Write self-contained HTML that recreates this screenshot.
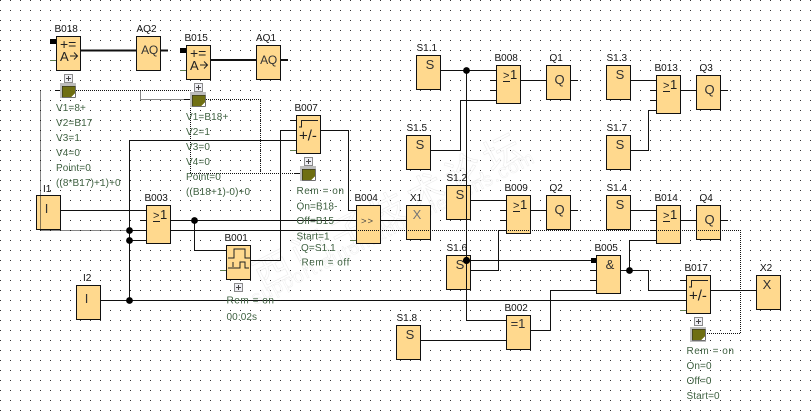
<!DOCTYPE html>
<html><head><meta charset="utf-8"><style>
html,body{margin:0;padding:0;background:#fff;width:811px;height:411px;overflow:hidden}
svg{display:block}
text{font-family:"Liberation Sans","Noto Sans CJK SC",sans-serif}
.b{fill:#FFD98E;stroke:#111;stroke-width:1}
.w{fill:none;stroke:#111;stroke-width:1}
.t{fill:none;stroke:#111;stroke-width:2}
.g{fill:none;stroke:#5a7a4a;stroke-width:1}
.d{fill:none;stroke:#111;stroke-width:1;stroke-dasharray:1 1}
.l{font-size:10px;fill:#111}
.s{font-size:13px;fill:#333;text-anchor:middle}
.aq{font-size:12px;fill:#333;text-anchor:middle;letter-spacing:-.3px}
.n{font-size:10px;fill:#3f6141;letter-spacing:.1px}
.r{letter-spacing:.55px}
.gt{font-size:14px;fill:#222}
.ge{font-size:11px;fill:#222}
.on{font-size:13px;fill:#222}
.pm{font-size:15px;fill:#222}
.sym{fill:none;stroke:#222;stroke-width:1}
</style></head><body>
<svg width="811" height="411" viewBox="0 0 811 411" xmlns="http://www.w3.org/2000/svg" shape-rendering="crispEdges">
<defs>
<pattern id="gr" width="10" height="10" patternUnits="userSpaceOnUse"><rect width="1" height="1" fill="#333"/></pattern>
</defs>
<rect width="811" height="411" fill="#fff"/>
<rect width="811" height="411" fill="url(#gr)"/>

<!-- watermark -->
<g shape-rendering="auto" opacity=".7">
<text transform="translate(262 290) rotate(-27)" font-size="37" fill="#fff" stroke="#e4e4e4" stroke-width=".6" letter-spacing="6">西门子技术论坛</text>
<text transform="translate(255 305) rotate(-27)" font-size="19" fill="#fff" stroke="#e8e8e8" stroke-width=".5" letter-spacing="1.2">support.automation.siemens.com</text>
</g>

<!-- solid wires under blocks -->
<g class="w">
<path d="M60 210.5H146M170 220.5H356M129.5 140V300.5M130 140.5H296M130 230.5H356M130 240.5H146M100 300.5H686"/>
<path d="M140 220.5H146M194.5 220.5V250.5H226M250 260.5H280.5V130.5H296M320 130.5H348.5V210.5H356M290 120.5H296M380 220.5H406"/>
<path d="M440 70.5H496M430 150.5H460.5V100.5H496M490 80.5H496M490 90.5H496M520 80.5H546M570 80.5H578"/>
<path d="M470 200.5H506M500 210.5H506M500 220.5H506M530 210.5H546M570 210.5H578M470 270.5H498.5V230.5H506M466.5 260.5H596M590 270.5H596M590 280.5H596"/>
<path d="M630 80.5H656M650 90.5H656M650 100.5H656M630 150.5H648.5V110.5H656M680 90.5H696M720 90.5H728"/>
<path d="M630 210.5H656M650 220.5H656M650 230.5H656M680 220.5H696M720 220.5H728"/>
<path d="M420 340.5H506M530 330.5H550.5V290.5H596M620 270.5H648.5V290.5H686M629.5 270.5V240.5H656M680 280.5H686M710 290.5H756"/>
</g>
<g class="g"><path d="M50 60.5H56M180 70.5H186M290 150.5H296M350 240.5H356M220 270.5H226M680 310.5H686"/></g>
<g class="t"><path d="M80 50.5H136M161 50.5H168M210 60H256M281 60H288"/></g>
<rect x="50" y="39" width="7" height="5" fill="#000"/>
<rect x="180" y="48" width="7" height="5" fill="#000"/>
<rect x="591" y="258" width="6" height="5" fill="#000"/>

<!-- blocks -->
<g class="b">
<rect x="56.5" y="36.5" width="24" height="34"/>
<rect x="136.5" y="36.5" width="24" height="34"/>
<rect x="186.5" y="45.5" width="24" height="34"/>
<rect x="256.5" y="45.5" width="24" height="34"/>
<rect x="416.5" y="55.5" width="24" height="34"/>
<rect x="496.5" y="65.5" width="24" height="38"/>
<rect x="406.5" y="135.5" width="24" height="34"/>
<rect x="296.5" y="115.5" width="24" height="38"/>
<rect x="446.5" y="185.5" width="24" height="34"/>
<rect x="506.5" y="195.5" width="24" height="38"/>
<rect x="546.5" y="65.5" width="24" height="34"/>
<rect x="606.5" y="65.5" width="24" height="34"/>
<rect x="656.5" y="75.5" width="24" height="38"/>
<rect x="696.5" y="75.5" width="24" height="34"/>
<rect x="606.5" y="135.5" width="24" height="34"/>
<rect x="546.5" y="195.5" width="24" height="34"/>
<rect x="606.5" y="195.5" width="24" height="34"/>
<rect x="656.5" y="205.5" width="24" height="38"/>
<rect x="696.5" y="205.5" width="24" height="34"/>
<rect x="36.5" y="195.5" width="24" height="34"/>
<rect x="146.5" y="205.5" width="24" height="38"/>
<rect x="76.5" y="285.5" width="24" height="34"/>
<rect x="226.5" y="245.5" width="24" height="34"/>
<rect x="356.5" y="205.5" width="24" height="38"/>
<rect x="406.5" y="205.5" width="24" height="34"/>
<rect x="446.5" y="255.5" width="24" height="34"/>
<rect x="396.5" y="325.5" width="24" height="34"/>
<rect x="506.5" y="315.5" width="24" height="34"/>
<rect x="596.5" y="255.5" width="24" height="38"/>
<rect x="686.5" y="275.5" width="24" height="38"/>
<rect x="756.5" y="275.5" width="24" height="34"/>
</g>

<!-- wires on top of blocks -->
<g class="w"><path d="M466.5 70.5V320.5H506"/></g>
<g class="d">
<path d="M76 90.5H190M40.5 90.5V230.5H129M140.5 90.5V99.5H190M206 99.5H260.5V173.5M190.5 100V173.5M190 173.5H295M356 230.5H740.5V333.5H706"/>
</g>
<g class="w"><path d="M55 90.5H62M184 99.5H192M295 173.5H302"/></g>

<!-- junctions -->
<g fill="#000" shape-rendering="auto">
<circle cx="466.5" cy="70.5" r="3.4"/>
<circle cx="466.5" cy="260.5" r="3.6"/>
<circle cx="129.5" cy="230.5" r="3.4"/>
<circle cx="129.5" cy="240.5" r="3.4"/>
<circle cx="129.5" cy="300.5" r="3.4"/>
<circle cx="194.5" cy="220.5" r="3.4"/>
<circle cx="629.5" cy="270.5" r="3.4"/>
</g>

<!-- note icons -->
<g>
<rect x="60" y="83" width="16" height="15" fill="#bdbdbd"/><rect x="62" y="86" width="13" height="11" fill="#6f6f12" stroke="#222" stroke-width=".5"/><path d="M71 97l4-4v4z" fill="#fff"/>
<rect x="190" y="92" width="16" height="15" fill="#bdbdbd"/><rect x="192" y="95" width="13" height="11" fill="#6f6f12" stroke="#222" stroke-width=".5"/><path d="M201 106l4-4v4z" fill="#fff"/>
<rect x="300" y="166" width="16" height="15" fill="#bdbdbd"/><rect x="302" y="169" width="13" height="11" fill="#6f6f12" stroke="#222" stroke-width=".5"/><path d="M311 180l4-4v4z" fill="#fff"/>
<rect x="690" y="327" width="16" height="15" fill="#bdbdbd"/><rect x="692" y="329" width="13" height="11" fill="#6f6f12" stroke="#222" stroke-width=".5"/><path d="M701 340l4-4v4z" fill="#fff"/>
</g>
<!-- plus boxes -->
<g fill="#eeeef4" stroke="#8a8a8a">
<rect x="64.5" y="74.5" width="8" height="8"/><rect x="194.5" y="83.5" width="8" height="8"/><rect x="304.5" y="157.5" width="8" height="8"/><rect x="234.5" y="283.5" width="8" height="8"/><rect x="694.5" y="317.5" width="8" height="8"/>
</g>
<path d="M66 78.500H71M68.500 76V81M196 87.500H201M198.500 85V90M306 161.500H311M308.500 159V164M236 287.500H241M238.500 285V290M696 321.500H701M698.500 319V324" stroke="#444" fill="none"/>

<!-- block symbols -->
<g shape-rendering="auto">
<text class="gt" x="60" y="49">+=</text><text class="on" x="60" y="61">A</text>
<path class="sym" d="M70 56H77M74 52.500L77.500 56L74 59.500"/>
<text class="gt" x="190" y="58">+=</text><text class="on" x="190" y="70">A</text>
<path class="sym" d="M200 65H207M204 61.500L207.500 65L204 68.500"/>
<text class="aq" x="149.500" y="54">AQ</text>
<text class="aq" x="268.500" y="64">AQ</text>
<text class="s" x="430" y="69">S</text><text class="s" x="420" y="149">S</text><text class="s" x="460" y="199">S</text><text class="s" x="460" y="269">S</text><text class="s" x="410" y="339">S</text><text class="s" x="620" y="79">S</text><text class="s" x="620" y="149">S</text><text class="s" x="620" y="209">S</text>
<text class="s" x="559.500" y="84">Q</text><text class="s" x="559.500" y="214">Q</text><text class="s" x="709.500" y="94">Q</text><text class="s" x="709.500" y="224">Q</text>
<text class="s" x="46.500" y="213">I</text><text class="s" x="86.500" y="303">I</text>
<text class="s" x="417" y="219" style="fill:#777">X</text><text class="s" x="767" y="289">X</text>
<text class="s" x="610" y="269">&amp;</text>
<text class="s" x="518" y="328">=1</text>
<text x="361" y="224" font-size="9.5" fill="#444" letter-spacing="1">&gt;&gt;</text>
<text class="ge" x="503" y="79">&gt;</text><text class="on" x="510" y="79">1</text>
<text class="ge" x="513" y="209">&gt;</text><text class="on" x="520" y="209">1</text>
<text class="ge" x="663" y="89">&gt;</text><text class="on" x="670" y="89">1</text>
<text class="ge" x="663" y="219">&gt;</text><text class="on" x="670" y="219">1</text>
<text class="ge" x="153" y="219">&gt;</text><text class="on" x="160" y="219">1</text>
<path class="sym" d="M503 81.500H510M513 211.500H520M663 91.500H670M663 221.500H670M153 221.500H160"/>
<!-- edge +/- -->
<path class="sym" d="M299 127H301.500V120.500H318"/>
<text class="pm" x="299" y="140.500">+/-</text>
<path class="sym" d="M689 287H691.500V280.500H708"/>
<text class="pm" x="689" y="300.500">+/-</text>
<!-- pulse -->
<path class="sym" d="M228 258H234V249H245V258H250"/>
<path class="sym" d="M228 268H240V262H245V268H249M233 262V267"/>
</g>

<!-- labels -->
<g class="l" shape-rendering="auto">
<text x="54.500" y="32">B018</text><text x="136.500" y="32">AQ2</text><text x="184.500" y="41">B015</text><text x="256" y="41">AQ1</text>
<text x="416.500" y="51">S1.1</text><text x="494.500" y="61">B008</text><text x="406.500" y="131">S1.5</text><text x="294.500" y="111">B007</text>
<text x="446.500" y="181">S1.2</text><text x="504.500" y="191">B009</text><text x="549.500" y="61">Q1</text><text x="606.500" y="61">S1.3</text>
<text x="654.500" y="71">B013</text><text x="699.500" y="71">Q3</text><text x="606.500" y="131">S1.7</text><text x="549.500" y="191">Q2</text>
<text x="606.500" y="191">S1.4</text><text x="654.500" y="201">B014</text><text x="699.500" y="201">Q4</text><text x="43" y="192">I1</text>
<text x="144.500" y="201">B003</text><text x="83" y="281">I2</text><text x="224.500" y="241">B001</text><text x="354.500" y="201">B004</text>
<text x="410" y="201">X1</text><text x="446.500" y="251">S1.6</text><text x="396.500" y="321">S1.8</text><text x="504.500" y="311">B002</text>
<text x="594.500" y="251">B005</text><text x="684.500" y="271">B017</text><text x="760" y="271">X2</text>
</g>

<!-- parameter text -->
<g class="n" shape-rendering="auto">
<text x="56" y="111">V1=8+</text><text x="56" y="126">V2=B17</text><text x="56" y="141">V3=1</text><text x="56" y="156">V4=0</text><text x="56" y="171">Point=0</text><text x="56" y="186">((8*B17)+1)+0</text>
<text x="186" y="120">V1=B18+</text><text x="186" y="135">V2=1</text><text x="186" y="150">V3=0</text><text x="186" y="165">V4=0</text><text x="186" y="180">Point=0</text><text x="186" y="195">((B18+1)-0)+0</text>
<text class="r" x="296.500" y="194">Rem = on</text><text x="296.500" y="209.500">On=B18-</text><text x="296.500" y="224">Off=B15</text><text x="296.500" y="239.500">Start=1</text><text x="301" y="251">Q=S1.1</text><text class="r" x="301.500" y="265.500">Rem = off</text>
<text class="r" x="226.500" y="303.500">Rem = on</text><text x="226.500" y="320">00:02s</text>
<text class="r" x="686.500" y="354">Rem = on</text><text x="686.500" y="369">On=0</text><text x="686.500" y="384">Off=0</text><text x="686.500" y="399">Start=0</text>
</g>
</svg>
</body></html>
